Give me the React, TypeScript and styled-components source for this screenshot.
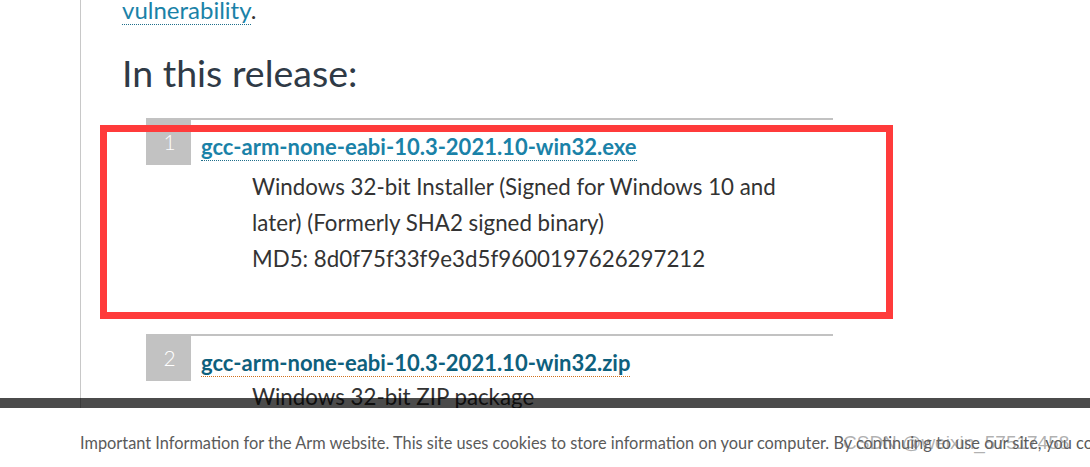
import React from "react";
import styled, { createGlobalStyle } from "styled-components";

const Global = createGlobalStyle`
  html, body { margin: 0; padding: 0; background: #fff; overflow: hidden; }
  body { font-family: Lato, "Open Sans", sans-serif; }
`;

const Page = styled.div`
  display: flex;
  height: 476px;
  margin-top: -8px;
`;

const Gutter = styled.div`
  width: 80px;
  flex: none;
  border-right: 1px solid #c8c8c8;
`;

const Main = styled.main`
  position: relative;
  flex: 1;
  padding-left: 41px;
`;

const Para = styled.p`
  margin: 0;
  font-size: 24px;
  line-height: 36px;
  color: #333;
`;

const InlineLink = styled.a<{ $visited?: boolean }>`
  color: ${(p) => (p.$visited ? "#0e607d" : "#1a82a8")};
  text-decoration: none;
  border-bottom: 1px dotted ${(p) => (p.$visited ? "#d0701c" : "#1f6f8b")};
`;

const Heading = styled.h2`
  margin: 21px 0 0;
  font-size: 37.5px;
  font-weight: 400;
  line-height: 48px;
  color: #2f3a46;
`;

const List = styled.ol`
  list-style: none;
  margin: 21px 0 0 24px;
  padding: 0;
  width: 687px;
`;

const Item = styled.li`
  display: flex;
  border-top: 2px solid #c2c2c2;
  padding-bottom: 57px;
`;

const Num = styled.span`
  flex: none;
  width: 45px;
  height: 47px;
  margin-top: -2px;
  padding-left: 2px;
  box-sizing: border-box;
  background: #c2c2c2;
  color: #fff;
  font-size: 21px;
  font-weight: 300;
  line-height: 47px;
  text-align: center;
`;

const Body = styled.div`
  padding: 9px 0 0 10px;
`;

const FileLink = styled(InlineLink)`
  font-size: 22px;
  font-weight: 700;
  line-height: 36px;
`;

const Desc = styled.div<{ $tight?: boolean }>`
  margin: ${(p) => (p.$tight ? "-2px" : "4px")} 0 0 51px;
  font-size: 22.3px;
  line-height: 36px;
  color: #333;
  width: 560px;
`;

const Highlight = styled.div`
  position: absolute;
  left: 19px;
  top: 133px;
  width: 779px;
  height: 180px;
  border: 7px solid #ff3b3b;
  pointer-events: none;
`;

const Banner = styled.div`
  position: fixed;
  left: 0;
  right: 0;
  bottom: 0;
  height: 69px;
  display: flex;
  flex-direction: column;
`;

const Shade = styled.div`
  height: 10px;
  background: rgba(0, 0, 0, 0.705);
`;

const BannerBody = styled.div`
  position: relative;
  flex: 1;
  background: #fff;
  padding: 25px 0 0 80px;
  font-family: Lato, "DejaVu Sans", sans-serif;
  font-size: 16.35px;
  line-height: 20px;
  color: #5a5a5a;
  white-space: nowrap;
  overflow: hidden;
`;

const Watermark = styled.span`
  position: absolute;
  left: 843px;
  top: 25px;
  font-family: "Liberation Sans", Arial, sans-serif;
  font-size: 19px;
  line-height: 20px;
  color: rgba(110, 110, 110, 0.55);
  white-space: nowrap;
`;

const items = [
  {
    n: 1,
    file: "gcc-arm-none-eabi-10.3-2021.10-win32.exe",
    lines: [
      "Windows 32-bit Installer (Signed for Windows 10 and later) (Formerly SHA2 signed binary)",
      "MD5: 8d0f75f33f9e3d5f9600197626297212",
    ],
    visited: false,
  },
  {
    n: 2,
    file: "gcc-arm-none-eabi-10.3-2021.10-win32.zip",
    lines: ["Windows 32-bit ZIP package"],
    visited: true,
  },
];

export default function App() {
  return (
    <>
      <Global />
      <Page>
        <Gutter />
        <Main>
          <Para>
            <InlineLink href="#">vulnerability</InlineLink>.
          </Para>
          <Heading>In this release:</Heading>
          <List>
            {items.map((it) => (
              <Item key={it.n}>
                <Num>{it.n}</Num>
                <Body>
                  <FileLink href="#" $visited={it.visited}>
                    {it.file}
                  </FileLink>
                  <Desc $tight={it.visited}>
                    {it.lines.map((l) => (
                      <div key={l}>{l}</div>
                    ))}
                  </Desc>
                </Body>
              </Item>
            ))}
          </List>
          <Highlight />
        </Main>
      </Page>
      <Banner>
        <Shade />
        <BannerBody>
          Important Information for the Arm website. This site uses cookies to store information on your
          computer. By continuing to use our site, you consent to our cookies.
          <Watermark>CSDN @weixin_57517458</Watermark>
        </BannerBody>
      </Banner>
    </>
  );
}
